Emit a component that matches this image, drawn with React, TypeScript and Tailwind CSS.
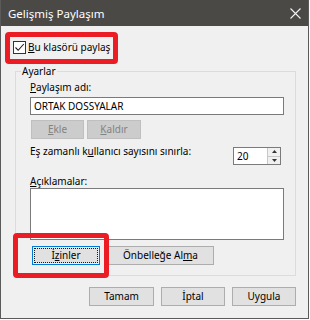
import React from "react";

const font = { fontFamily: '"Noto Sans", "Open Sans", sans-serif' };

function Btn({
  children,
  className = "",
  disabled = false,
  focused = false,
}: {
  children: React.ReactNode;
  className?: string;
  disabled?: boolean;
  focused?: boolean;
}) {
  if (focused) {
    return (
      <div
        className={`h-[19px] border border-[#0078d7] bg-[#e5f1fb] p-[1px] flex ${className}`}
      >
        <div className="flex-1 flex items-center justify-center border border-dotted border-[#1a1a1a] bg-[#e1e1e1] text-black">
          {children}
        </div>
      </div>
    );
  }
  return (
    <div
      className={`h-[19px] border flex items-center justify-center ${
        disabled
          ? "border-[#bfbfbf] bg-[#cccccc] text-[#838383]"
          : "border-[#adadad] bg-[#e1e1e1] text-black"
      } ${className}`}
    >
      {children}
    </div>
  );
}

export default function App() {
  return (
    <div
      className="w-[310px] h-[320px] bg-white relative text-[10px] leading-[13px] text-black"
      style={font}
    >
      <div className="w-[309px] h-[319px] border border-t-0 border-[#5a5a5a] bg-[#f0f0f0] flex flex-col">
        {/* Title bar */}
        <div className="h-[26px] bg-[#4b4946] flex items-center justify-between pl-[7px] pr-[7px] shrink-0">
          <span className="text-[11.5px] text-white tracking-[0px]">Gelişmiş Paylaşım</span>
          <svg width="11" height="11" viewBox="0 0 11 11" className="mr-[0px]">
            <path d="M0.5 0.5 L10.5 10.5 M10.5 0.5 L0.5 10.5" stroke="#f2f2f2" strokeWidth="1.1" />
          </svg>
        </div>

        {/* Body */}
        <div className="flex flex-col pl-[12px]">
          {/* checkbox row */}
          <div className="mt-[15px] flex items-center h-[13px] gap-[2px]">
            <div className="w-[13px] h-[13px] border border-[#333333] bg-white flex items-center justify-center">
              <svg width="11" height="11" viewBox="0 0 11 11">
                <path d="M1.5 5.5 L4.2 8.3 L9.8 2" stroke="#1a1a1a" strokeWidth="1.1" fill="none" />
              </svg>
            </div>
            <span>
              <u className="underline-offset-[1px]">B</u>u klasörü paylaş
            </span>
          </div>

          {/* group box */}
          <div className="mt-[17px] ml-[2px] w-[281px] border border-[#dcdcdc] relative flex flex-col pl-[14px] pt-[9px] pb-[10px]">
            <span className="absolute left-[5px] -top-[7px] px-[1px] bg-[#f0f0f0]">Ayarlar</span>

            <span>
              <u className="underline-offset-[1px]">P</u>aylaşım adı:
            </span>
            <div className="mt-[3px] w-[254px] h-[18px] border border-[#7a7a7a] bg-white flex items-center pl-[3px]">
              ORTAK DOSSYALAR
            </div>

            <div className="mt-[5px] ml-[1px] flex gap-[3px]">
              <Btn disabled className="w-[53px]">
                <span>
                  <u className="underline-offset-[1px]">E</u>kle
                </span>
              </Btn>
              <Btn disabled className="w-[54px]">
                <span>
                  <u className="underline-offset-[1px]">K</u>aldır
                </span>
              </Btn>
            </div>

            <div className="mt-[5px] w-[251px] flex justify-between items-start">
              <span className="mt-[1px]">
                Eş zamanlı k<u className="underline-offset-[1px]">u</u>llanıcı sayısını sınırla:
              </span>
              <div className="mt-[3px] w-[48px] h-[18px] border border-[#7a7a7a] bg-white flex">
                <div className="flex-1 flex items-center pl-[3px]">20</div>
                <div className="w-[13px] flex flex-col border-l border-[#c8c8c8]">
                  <div className="flex-1 bg-[#f0f0f0] border-b border-[#c8c8c8] flex items-center justify-center">
                    <svg width="5" height="3" viewBox="0 0 5 3">
                      <path d="M0 3 L2.5 0 L5 3 Z" fill="#333" />
                    </svg>
                  </div>
                  <div className="flex-1 bg-[#f0f0f0] flex items-center justify-center">
                    <svg width="5" height="3" viewBox="0 0 5 3">
                      <path d="M0 0 L2.5 3 L5 0 Z" fill="#333" />
                    </svg>
                  </div>
                </div>
              </div>
            </div>

            <span className="mt-[10px]">
              <u className="underline-offset-[1px]">A</u>çıklamalar:
            </span>
            <div className="mt-[0px] w-[254px] h-[52px] border border-[#7a7a7a] bg-white" />

            <div className="mt-[6px] ml-[2px] flex gap-[7px]">
              <Btn focused className="w-[68px]">
                <span>
                  İ<u className="underline-offset-[1px]">z</u>inler
                </span>
              </Btn>
              <Btn className="w-[107px]">
                <span>
                  Önbelleğe Al<u className="underline-offset-[1px]">m</u>a
                </span>
              </Btn>
            </div>
          </div>

          {/* bottom buttons */}
          <div className="mt-[11px] flex justify-end gap-[7px] w-[283px]">
            <Btn className="w-[65px]">Tamam</Btn>
            <Btn className="w-[64px]">
              <span>
                <u className="underline-offset-[1px] decoration-transparent">İ</u>ptal
              </span>
            </Btn>
            <Btn className="w-[64px]">Uygula</Btn>
          </div>
        </div>
      </div>

      {/* red annotation boxes */}
      <div className="absolute left-[5px] top-[32px] w-[113px] h-[32px] border-[5px] border-[#ec1c24] rounded-[4px] pointer-events-none" />
      <div className="absolute left-[13px] top-[233px] w-[96px] h-[45px] border-[5px] border-[#ec1c24] rounded-[4px] pointer-events-none" />
    </div>
  );
}
